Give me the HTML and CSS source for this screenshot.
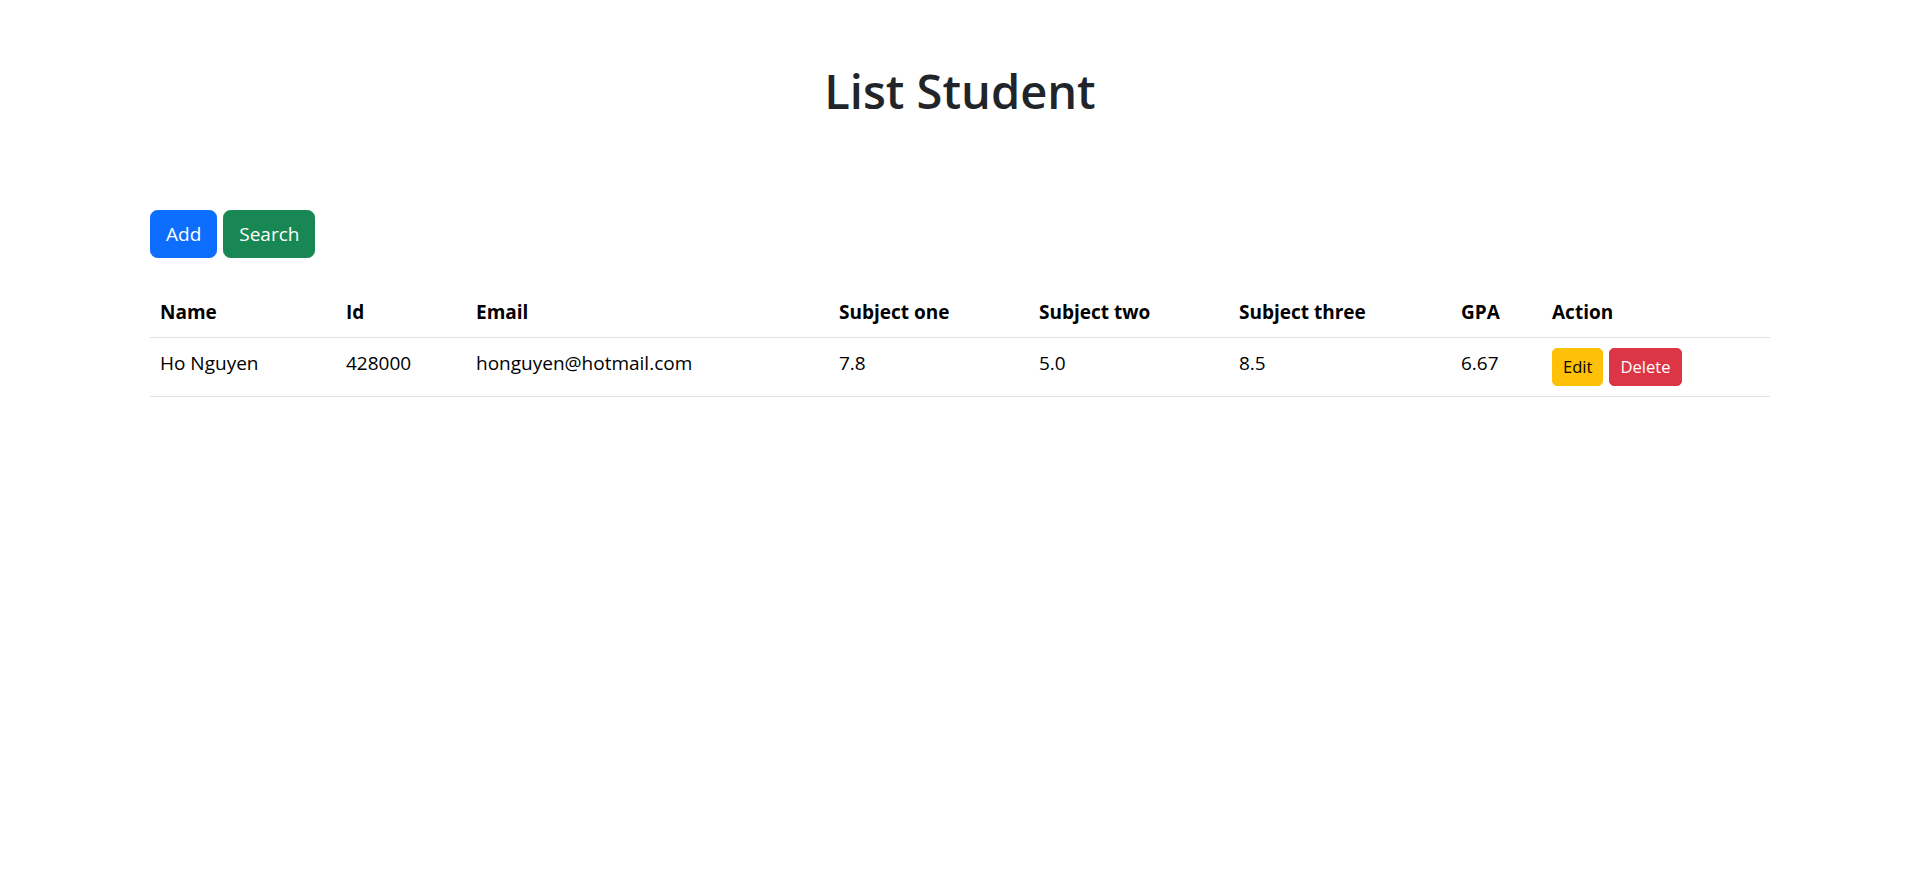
FILE: index.html
```html
<!DOCTYPE html>
<html lang="en">
<head>
<meta charset="utf-8">
<title>List Student</title>
<link rel="stylesheet" href="styles.css">
</head>
<body>
<div class="container">
  <h1 class="title">List Student</h1>
  <div class="toolbar">
    <button class="btn btn-primary">Add</button>
    <button class="btn btn-success">Search</button>
  </div>
  <table class="table">
    <colgroup>
      <col class="c-name"><col class="c-id"><col class="c-email"><col class="c-s1"><col class="c-s2"><col class="c-s3"><col class="c-gpa"><col class="c-action">
    </colgroup>
    <thead>
      <tr>
        <th>Name</th><th>Id</th><th>Email</th><th>Subject one</th><th>Subject two</th><th>Subject three</th><th>GPA</th><th>Action</th>
      </tr>
    </thead>
    <tbody>
      <tr>
        <td>Ho Nguyen</td><td>428000</td><td>honguyen@hotmail.com</td><td>7.8</td><td>5.0</td><td>8.5</td><td>6.67</td>
        <td class="actions"><button class="btn btn-sm btn-warning">Edit</button><button class="btn btn-sm btn-danger">Delete</button></td>
      </tr>
    </tbody>
  </table>
</div>
</body>
</html>
```

FILE: styles.css
```css
html, body {
  margin: 0;
  padding: 0;
  background: #fff;
}
body {
  font-family: "Open Sans", "Noto Sans", "Liberation Sans", sans-serif;
  font-size: 19px;
  line-height: 1.5;
  color: #212529;
}
.container {
  max-width: 1650px;
  margin: 0 auto;
  padding: 0 15px;
  box-sizing: border-box;
}
.title {
  font-size: 47px;
  font-weight: 600;
  line-height: 60px;
  text-align: center;
  margin: 61px 0 0;
  color: #212529;
}
.toolbar {
  display: flex;
  gap: 6px;
  margin-top: 89px;
}
.btn {
  font-family: inherit;
  font-size: 19px;
  line-height: 30px;
  padding: 7.5px 15px;
  border: 1.25px solid transparent;
  border-radius: 7.5px;
  color: #fff;
  cursor: pointer;
  box-sizing: border-box;
  height: 47.5px;
}
.btn-primary { background: #0d6efd; border-color: #0d6efd; }
.btn-success { background: #198754; border-color: #198754; }
.btn-sm {
  font-size: 16.6px;
  line-height: 26.25px;
  padding: 5px 10px;
  border-radius: 5px;
  height: 38.75px;
}
.btn-warning { background: #ffc107; border-color: #ffc107; color: #000; }
.btn-danger { background: #dc3545; border-color: #dc3545; color: #fff; }
.table {
  width: 100%;
  table-layout: fixed;
  border-collapse: collapse;
  margin-top: 29px;
  color: #000;
}
.c-name { width: 186px; }
.c-id { width: 130px; }
.c-email { width: 363px; }
.c-s1 { width: 200px; }
.c-s2 { width: 200px; }
.c-s3 { width: 222px; }
.c-gpa { width: 91px; }
.c-action { width: 228px; }
.table th, .table td {
  padding: 10px;
  text-align: left;
  vertical-align: top;
  border-bottom: 1px solid #dee2e6;
  line-height: 30px;
}
.table th { font-weight: 700; }
.actions .btn + .btn { margin-left: 6px; }
```
